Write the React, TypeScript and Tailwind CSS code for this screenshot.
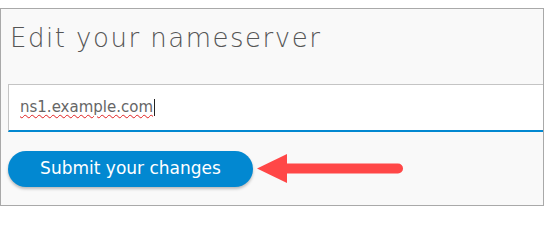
import React from "react";

export default function App() {
  return (
    <div className="w-[544px] h-[224px] bg-white pt-2" style={{ fontFamily: '"DejaVu Sans", "Open Sans", sans-serif' }}>
      <div className="h-[198px] border border-[#a9a9a9] bg-[#f9f9f9]">
        <h1 className="pl-[9px] pt-[14px] text-[26px] leading-[30px] font-extralight text-[#555] tracking-[1.5px]">
          Edit your nameserver
        </h1>
        <div className="ml-[7px] mt-[31px] h-[48px] bg-white border-t border-l border-[#c4c4c4] border-b-2 border-b-[#0288d1] flex items-center pl-[11px]">
          <span className="text-[15px] text-[#666] underline decoration-wavy decoration-[#e02020] decoration-1 underline-offset-2">
            ns1.example.com
          </span>
          <span className="ml-[1px] w-px h-[17px] bg-[#222]" />
        </div>
        <div className="ml-[7px] mt-[19px] flex items-center gap-[4px]">
          <button className="w-[245px] h-[36px] rounded-full bg-[#0288d1] text-white text-[17px] shadow-[0_2px_3px_rgba(0,0,0,0.25)]">
            Submit your changes
          </button>
          <svg width="150" height="30" viewBox="0 0 150 30">
            <polygon points="0,14.5 30,0 30,29" fill="#ff4747" />
            <line x1="28" y1="14.5" x2="141" y2="14.5" stroke="#ff4747" strokeWidth="10" strokeLinecap="round" />
          </svg>
        </div>
      </div>
    </div>
  );
}
